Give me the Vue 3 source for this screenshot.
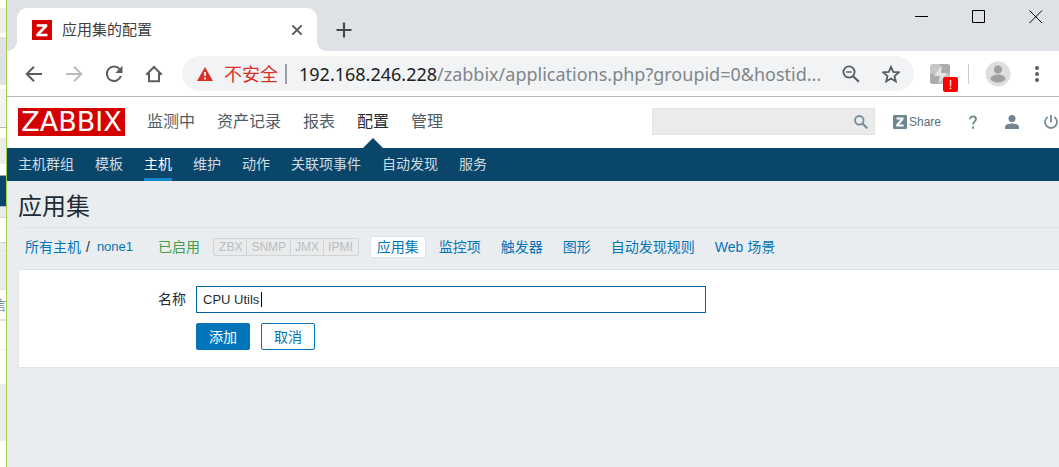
<script setup>
import { ref } from 'vue'

const mainMenu = [
  { label: '监测中' },
  { label: '资产记录' },
  { label: '报表' },
  { label: '配置', active: true },
  { label: '管理' },
]
const subMenu = [
  { label: '主机群组' },
  { label: '模板' },
  { label: '主机', active: true },
  { label: '维护' },
  { label: '动作' },
  { label: '关联项事件' },
  { label: '自动发现' },
  { label: '服务' },
]
const interfaces = ['ZBX', 'SNMP', 'JMX', 'IPMI']
const hostTabs = [
  { label: '应用集', active: true },
  { label: '监控项' },
  { label: '触发器' },
  { label: '图形' },
  { label: '自动发现规则' },
  { label: 'Web 场景' },
]
const name = ref('CPU Utils')
const search = ref('')
</script>

<template>
  <div class="desktop">
    <div class="behind" aria-hidden="true"><span>信</span></div>
    <div class="window">
      <div class="tabstrip">
        <div class="tab">
          <svg class="favicon" viewBox="0 0 20 20"><rect width="20" height="20" fill="#d40000" /><path d="M5 4.500H15V6.500L7.800 14H15.200V16H4.600V14L11.900 6.500H5Z" fill="#fff" stroke="#fff" stroke-width=".6" /></svg>
          <span class="tab-title">应用集的配置</span>
          <button class="plain" aria-label="关闭标签页">
            <svg width="12" height="12" viewBox="0 0 12 12"><path d="M1.300 1.300l9.400 9.400M10.700 1.300l-9.400 9.400" stroke="#54585d" stroke-width="1.900" /></svg>
          </button>
        </div>
        <button class="plain newtab" aria-label="新标签页">
          <svg width="16" height="16" viewBox="0 0 16 16"><path d="M8 .5v15M.5 8h15" stroke="#45494d" stroke-width="2.200" /></svg>
        </button>
        <div class="winctl">
          <button class="plain" aria-label="最小化"><svg width="14" height="14" viewBox="0 0 14 14"><path d="M0 6.500h13" stroke="#000" /></svg></button>
          <button class="plain" aria-label="最大化"><svg width="14" height="14" viewBox="0 0 14 14"><path d="M.5 .5h12v12H.5z" fill="none" stroke="#000" /></svg></button>
          <button class="plain" aria-label="关闭"><svg width="14" height="14" viewBox="0 0 14 14"><path d="M.5 .5l12.500 12.500M13 .5L.5 13" stroke="#000" /></svg></button>
        </div>
      </div>

      <div class="toolbar">
        <div class="nav">
          <button class="plain" aria-label="后退"><svg width="18" height="18" viewBox="0 0 18 18"><path d="M17 9H2M9 1.700L1.700 9L9 16.300" fill="none" stroke="#5a5e63" stroke-width="2" /></svg></button>
          <button class="plain" aria-label="前进"><svg width="18" height="18" viewBox="0 0 18 18"><path d="M1 9h15M9 1.700L16.300 9L9 16.300" fill="none" stroke="#b9bbbe" stroke-width="2" /></svg></button>
          <button class="plain" aria-label="重新加载"><svg width="18" height="18" viewBox="0 0 18 18"><path d="M14.600 4.200A7.200 7.200 0 1 0 15.900 11" fill="none" stroke="#5a5e63" stroke-width="2" /><path d="M17.500 .8v7.200h-7.200z" fill="#5a5e63" /></svg></button>
          <button class="plain" aria-label="主页"><svg width="18" height="18" viewBox="0 0 18 18"><path d="M1.300 9.700L9 2l7.700 7.700M4 8v8.200h10V8" fill="none" stroke="#5a5e63" stroke-width="2" /></svg></button>
        </div>
        <div class="omnibox">
          <svg class="warn" width="16" height="14" viewBox="0 0 16 14"><path d="M8 0l8 14H0z" fill="#d93025" /><path d="M8 5v4M8 10.500v2" stroke="#fff" stroke-width="1.700" /></svg>
          <span class="insecure">不安全</span>
          <span class="bar"></span>
          <span class="url"><b>192.168.246.228</b>/zabbix/applications.php?groupid=0&amp;hostid...</span>
          <button class="plain" aria-label="缩放"><svg width="18" height="18" viewBox="0 0 18 18"><circle cx="7" cy="7" r="5.600" fill="none" stroke="#5a5e63" stroke-width="1.800" /><path d="M11.200 11.200l5.600 5.600" stroke="#5a5e63" stroke-width="2.200" /><path d="M4.300 7h5.400" stroke="#5a5e63" stroke-width="1.500" /></svg></button>
          <button class="plain" aria-label="收藏"><svg width="18" height="18" viewBox="0 0 18 18"><path d="M9 1.800l2.200 5.100 5.500.5-4.200 3.600 1.300 5.400L9 13.500l-4.800 2.900 1.300-5.400L1.300 7.400l5.500-.5z" fill="none" stroke="#5a5e63" stroke-width="1.800" /></svg></button>
        </div>
        <button class="plain ext" aria-label="扩展程序">
          <svg width="20" height="20" viewBox="0 0 20 20"><rect width="20" height="20" rx="3" fill="#c6c6c6" /><path d="M0 10h10v10H3a3 3 0 0 1-3-3zM10 0h7a3 3 0 0 1 3 3v7H10z" fill="#ababab" /><path d="M12 1L4 12h6L8 20l9-11h-6z" fill="#e3e3e3" /></svg>
          <span class="badge">!</span>
        </button>
        <span class="divider"></span>
        <button class="plain" aria-label="用户"><svg width="26" height="26" viewBox="0 0 26 26"><circle cx="13" cy="13" r="12.500" fill="#dedede" /><circle cx="13" cy="8.500" r="4" fill="#a0a0a0" /><path d="M5.500 18c0-3 4-4.500 7.500-4.500s7.500 1.500 7.500 4.500c-1 2.200-4 3.500-7.500 3.500S6.500 20.200 5.500 18z" fill="#a0a0a0" /></svg></button>
        <button class="plain more" aria-label="更多"><svg width="4" height="16" viewBox="0 0 4 16"><path d="M2 0a2 2 0 1 1 0 4a2 2 0 0 1 0-4M2 6a2 2 0 1 1 0 4a2 2 0 0 1 0-4M2 12a2 2 0 1 1 0 4a2 2 0 0 1 0-4" fill="#5a5e63" /></svg></button>
      </div>

      <header class="header">
        <a href="#" class="logo">ZABBIX</a>
        <nav class="mainmenu">
          <a v-for="m in mainMenu" :key="m.label" href="#" :class="{ active: m.active }">{{ m.label }}</a>
        </nav>
        <div class="tools">
          <form class="search" @submit.prevent>
            <input v-model="search" type="text" aria-label="搜索" />
            <button class="plain" aria-label="搜索"><svg width="14" height="14" viewBox="0 0 14 14"><circle cx="5.300" cy="5.300" r="4.300" fill="none" stroke="#768d99" stroke-width="1.800" /><path d="M8.500 8.500l4.800 4.800" stroke="#768d99" stroke-width="2.200" /></svg></button>
          </form>
          <a href="#" class="share"><svg width="14" height="14" viewBox="0 0 14 14"><rect width="14" height="14" rx="1" fill="#6f8590" /><path d="M3.500 2.500h7v2L6.200 9.600h4.500v2H3.200v-2l4.300-5.100h-4z" fill="#fff" /></svg>Share</a>
          <a href="#" class="icon" aria-label="帮助"><svg width="14" height="14" viewBox="0 0 14 14"><path d="M4 4.300C4 2.300 5.200 1.300 7 1.300s3 1 3 2.700C10 6.300 7 6.500 7 9.500" fill="none" stroke="#6f8590" stroke-width="1.800" /><path d="M7 11.500v2.200" stroke="#6f8590" stroke-width="2" /></svg></a>
          <a href="#" class="icon" aria-label="个人资料"><svg width="14" height="14" viewBox="0 0 14 14"><circle cx="7" cy="3.500" r="3.500" fill="#6f8590" /><path d="M0 14v-2C0 9.500 4 8.500 7 8.500s7 1 7 3.500v2z" fill="#6f8590" /></svg></a>
          <a href="#" class="icon" aria-label="退出"><svg width="14" height="14" viewBox="0 0 14 14"><path d="M7 0v7.500M3.700 2A6 6 0 1 0 10.300 2" fill="none" stroke="#768d99" stroke-width="1.800" /></svg></a>
        </div>
      </header>

      <nav class="submenu">
        <a v-for="m in subMenu" :key="m.label" href="#" :class="{ active: m.active }">{{ m.label }}</a>
      </nav>

      <main>
        <h1>应用集</h1>
        <div class="crumbs">
          <a href="#">所有主机</a>
          <span class="slash">/</span>
          <a href="#" class="latin">none1</a>
          <span class="enabled">已启用</span>
          <span class="tags"><span v-for="i in interfaces" :key="i">{{ i }}</span></span>
          <nav class="hosttabs">
            <a v-for="t in hostTabs" :key="t.label" href="#" :class="{ active: t.active }">{{ t.label }}</a>
          </nav>
        </div>
        <form class="panel" @submit.prevent>
          <label for="app-name">名称</label>
          <div class="field">
            <input id="app-name" v-model="name" type="text" />
            <span class="caret"></span>
          </div>
          <div class="actions">
            <button class="primary" type="submit">添加</button>
            <button type="button">取消</button>
          </div>
        </form>
      </main>
    </div>
  </div>
</template>

<style>
body {
  margin: 0;
  background: #e9edf0;
}
</style>

<style scoped>
* {
  box-sizing: border-box;
}
.desktop {
  display: flex;
  min-height: 100vh;
  overflow: hidden;
  font: 14px/20px "Liberation Sans", "Noto Sans CJK SC", sans-serif;
  color: #1f2c33;
}
svg {
  display: block;
}
a {
  color: #0275b8;
  text-decoration: none;
}
.plain {
  padding: 0;
  border: 0;
  background: none;
}
.behind {
  flex: none;
  display: flex;
  justify-content: flex-end;
  width: 6px;
  padding-top: 295px;
  overflow: hidden;
  color: #768d99;
  background: linear-gradient(#fff 8px, #eee 8px 33px, #fff 33px 37px, #dee1e6 37px 85px, #fff 85px 89px, #f1f3f4 89px 127px, #b6b6b6 127px 128px, #fff 128px 138px, #ebebeb 138px 164px, #fff 164px 175px, #8fa7b5 175px 176px, #0a466a 176px 206px, #aebcc5 206px 207px, #e9edf0 207px 217px, #ccd5d9 217px 218px, #fff 218px 242px, #ccd5d9 242px 243px, #e9edf0 243px 250px, #dfe4e7 250px 251px, #e9edf0 251px 289px, #dfe4e7 289px 290px, #fff 290px 319px, #dfe4e7 319px 321px, #fff 321px 349px, #ebeef0 349px 350px, #fff 350px 384px, #e9edf0 384px 441px, #fff 441px);
}
.window {
  flex: 1;
  min-width: 0;
  border-left: 1px solid #a3cf47;
  background: #e9edf0;
}
.tabstrip {
  display: flex;
  height: 51px;
  padding-left: 10px;
  background: #dee1e6;
}
.tab {
  position: relative;
  display: flex;
  align-items: center;
  width: 300px;
  margin-top: 8px;
  padding: 0 14px 0 15px;
  border-radius: 10px 10px 0 0;
  background: #fff;
}
.tab::before,
.tab::after {
  content: "";
  position: absolute;
  bottom: 0;
  width: 10px;
  height: 10px;
}
.tab::before {
  right: 100%;
  background: radial-gradient(circle at 0 0, #dee1e6 10px, #fff 10px);
}
.tab::after {
  left: 100%;
  background: radial-gradient(circle at 100% 0, #dee1e6 10px, #fff 10px);
}
.favicon {
  width: 20px;
  height: 20px;
}
.tab-title {
  flex: 1;
  margin-left: 10px;
  font-size: 15px;
  color: #3c4043;
}
.newtab {
  margin: 8px 0 0 19px;
}
.winctl {
  display: flex;
  gap: 43px;
  height: 34px;
  margin-left: auto;
  padding-right: 16px;
}
.toolbar {
  display: flex;
  align-items: center;
  height: 46px;
  padding: 0 20px 0 18px;
  border-bottom: 1px solid #b6b6b6;
  background: #fff;
}
.nav {
  display: flex;
  gap: 22px;
}
.omnibox {
  flex: 1;
  display: flex;
  align-items: center;
  min-width: 0;
  height: 35px;
  margin-left: 19px;
  padding: 0 14px 0 15px;
  border-radius: 18px;
  background: #f1f3f4;
  font: 18px/24px "Noto Sans", "Noto Sans CJK SC", sans-serif;
}
.omnibox button {
  flex: none;
  margin-left: 22px;
}
.warn {
  flex: none;
}
.insecure {
  flex: none;
  margin-left: 11px;
  color: #d93025;
}
.bar {
  flex: none;
  width: 2px;
  height: 20px;
  margin: 0 12px 0 7px;
  background: #9aa0a6;
}
.url {
  flex: 1;
  min-width: 0;
  overflow: hidden;
  white-space: nowrap;
  color: #80868b;
}
.url b {
  font-weight: 400;
  color: #202124;
}
.ext {
  position: relative;
  margin-left: 16px;
}
.badge {
  position: absolute;
  left: 13px;
  top: 13px;
  width: 15px;
  height: 15px;
  border-radius: 2px;
  background: #f00;
  color: #fff;
  font: 13px/15px "Liberation Sans", sans-serif;
}
.divider {
  width: 1px;
  height: 20px;
  margin: 0 16px 0 18px;
  background: #ccc;
}
.more {
  margin-left: 24px;
}
.header {
  display: flex;
  height: 51px;
  padding-left: 11px;
  background: #fff;
}
.logo {
  width: 107px;
  height: 28px;
  margin-top: 11px;
  background: #d40000;
  color: #fff;
  text-align: center;
  font: 27px/28px "DejaVu Sans", sans-serif;
}
.mainmenu {
  display: flex;
  gap: 22px;
  margin-left: 22px;
  font-size: 16px;
  line-height: 49px;
}
.mainmenu a {
  position: relative;
  color: #4f5c63;
}
.mainmenu .active {
  color: #1f2c33;
}
.mainmenu .active::after {
  content: "";
  position: absolute;
  left: 50%;
  bottom: 0;
  margin-left: -10px;
  border: 10px solid transparent;
  border-top: 0;
  border-bottom-color: #0a466a;
}
.tools {
  display: flex;
  align-items: center;
  height: 49px;
  margin-left: auto;
  padding-right: 1px;
}
.search {
  display: flex;
  align-items: center;
  width: 223px;
  height: 27px;
  padding-right: 6px;
  border: 1px solid #e3e3e3;
  background: #ebebeb;
}
.search input {
  flex: 1;
  min-width: 0;
  border: 0;
  outline: 0;
  background: none;
}
.share {
  display: flex;
  align-items: center;
  gap: 2px;
  margin-left: 18px;
  font-size: 12px;
  color: #5d6f79;
}
.icon {
  margin-left: 25px;
}
.submenu {
  display: flex;
  gap: 21px;
  height: 33px;
  padding-left: 11px;
  background: #0a466a;
}
.submenu a {
  padding-top: 6px;
  color: #d0dce3;
}
.submenu .active {
  border-bottom: 3px solid #1589cb;
  color: #fff;
}
main {
  padding-left: 11px;
}
h1 {
  margin: 0;
  padding: 10px 0 4px;
  border-bottom: 1px solid #dfe4e7;
  font-size: 24px;
  font-weight: 400;
  line-height: 32px;
}
.crumbs {
  display: flex;
  align-items: center;
  height: 41px;
  padding: 0 0 3px 7px;
  white-space: nowrap;
}
.slash {
  margin: 0 7px 0 5px;
}
.latin {
  font-size: 13px;
}
.enabled {
  margin-left: 25px;
}
.enabled {
  color: #429e47;
}
.tags {
  display: flex;
  margin-left: 13px;
  padding: 0 1px;
  border: 1px solid #ccd5d9;
  border-radius: 2px;
  background: #ebebeb;
  color: #b4bfc5;
  font-size: 12px;
  line-height: 16px;
}
.tags span {
  padding: 0 4px;
}
.tags span + span {
  border-left: 1px solid #ccd5d9;
}
.hosttabs {
  display: flex;
  gap: 6px;
  margin-left: 11px;
}
.hosttabs a {
  padding: 0 6px;
  border: 1px solid transparent;
  border-radius: 2px;
}
.hosttabs .active {
  border-color: #dfe4e7;
  background: #fff;
}
.panel {
  display: grid;
  grid-template-columns: 167px 1fr;
  gap: 10px;
  padding: 16px 0 17px;
  border: 1px solid #dfe4e7;
  border-right: 0;
  background: #fff;
}
.panel label {
  text-align: right;
  line-height: 26px;
}
.field {
  position: relative;
  max-width: 510px;
}
.field input {
  display: block;
  width: 100%;
  height: 27px;
  padding: 0 6px;
  border: 1px solid #02659f;
  outline: 0;
  background: #fff;
  color: #1f2c33;
  font: inherit;
  font-size: 13px;
}
.caret {
  position: absolute;
  left: 65px;
  top: 6px;
  width: 1px;
  height: 15px;
  background: #000;
}
.actions {
  grid-column: 2;
  display: flex;
  gap: 11px;
}
.actions button {
  width: 54px;
  height: 27px;
  padding: 0;
  border: 1px solid #0275b8;
  border-radius: 2px;
  background: #fff;
  color: #0275b8;
  font: inherit;
}
.actions .primary {
  background: #0275b8;
  color: #fff;
}
</style>
